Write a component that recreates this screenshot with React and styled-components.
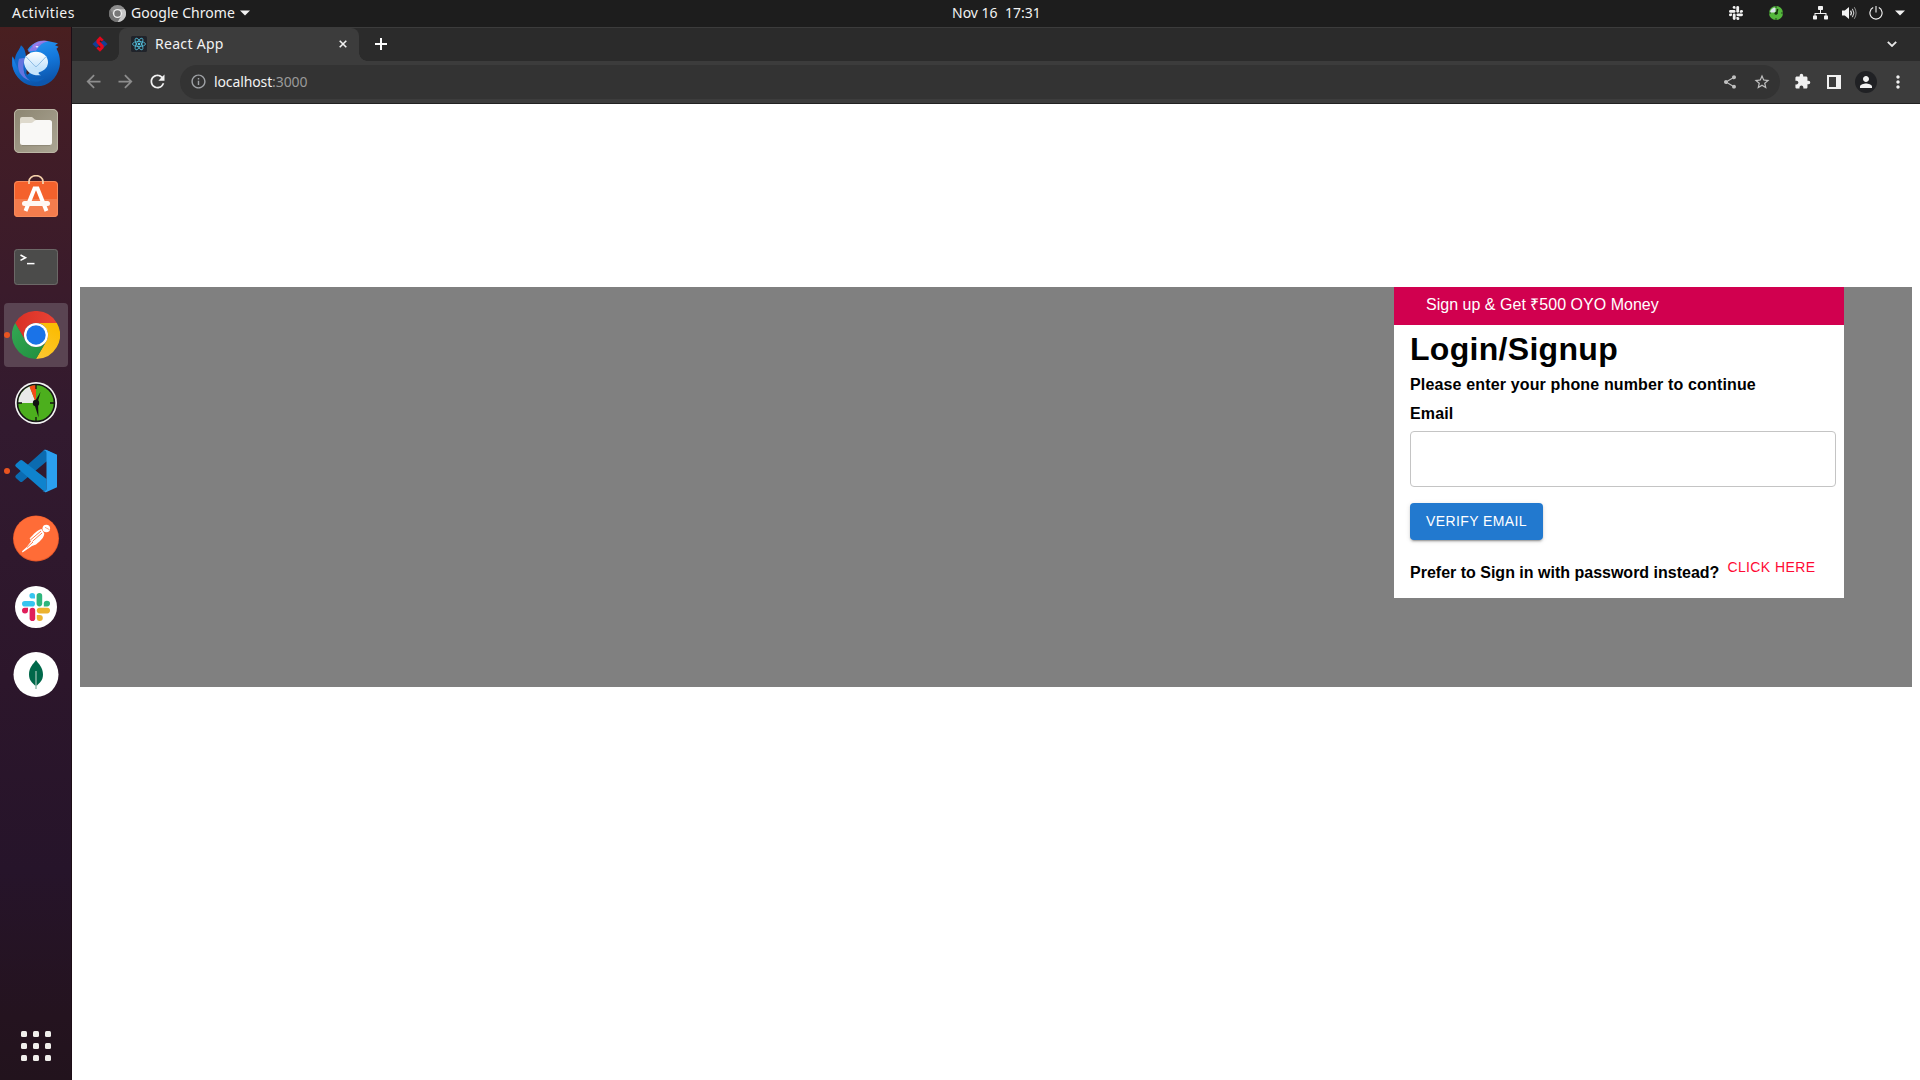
import React from "react";
import styled, { createGlobalStyle } from "styled-components";
import {
  MdArrowBack, MdArrowForward, MdRefresh, MdInfoOutline, MdShare, MdStarBorder,
  MdExtension, MdPerson, MdMoreVert,
} from "react-icons/md";

const GlobalStyle = createGlobalStyle`
  *, *::before, *::after { box-sizing: border-box; }
  body { margin: 0; background: #fff; overflow: hidden; }
  svg { display: block; flex: none; }
`;

const Desktop = styled.div`
  width: 1920px;
  height: 1080px;
  display: flex;
  flex-direction: column;
  font-family: "Noto Sans", "Open Sans", sans-serif;
`;

/* ---------- system bar ---------- */
const SystemBar = styled.header`
  height: 27px;
  flex: none;
  display: grid;
  grid-template-columns: 940px auto 1fr;
  align-items: center;
  padding: 0 15px 1px 12px;
  background: #1d1d1d;
  color: #f2f2f2;
`;
const BarGroup = styled.div`
  display: flex;
  align-items: center;
  justify-content: ${(p) => (p.$end ? "flex-end" : "flex-start")};
`;
const UiText = styled.span`
  font-size: ${(p) => p.$size || 14}px;
  line-height: 20px;
  letter-spacing: ${(p) => p.$track || 0}px;
  width: ${(p) => (p.$w ? `${p.$w}px` : "auto")};
  color: ${(p) => p.$color || "#f2f2f2"};
  white-space: pre;
`;
const AppMenu = styled.div`
  display: flex;
  align-items: center;
  margin-left: 34px;
`;
const Spacer = styled.span`
  width: ${(p) => p.$w}px;
  flex: none;
`;

/* ---------- dock ---------- */
const Body = styled.div`
  flex: 1;
  min-height: 0;
  display: flex;
`;
const Dock = styled.nav`
  width: 72px;
  flex: none;
  display: flex;
  flex-direction: column;
  align-items: center;
  gap: 4px;
  padding: 4px 0 2px;
  border-right: 1px solid #1c0d16;
  background: linear-gradient(180deg, #491f20 0%, #421d26 9%, #3a1b2b 25%, #321a2f 38%, #2c162b 62%, #26142a 80%, #24131f 94%, #22131d 100%);
`;
const DockItem = styled.div`
  position: relative;
  width: 64px;
  height: 64px;
  margin-left: 1px;
  flex: none;
  display: flex;
  align-items: center;
  justify-content: center;
  border-radius: 4px;
  background: ${(p) => (p.$active ? "#5a4452" : "transparent")};
`;
const RunningDot = styled.i`
  position: absolute;
  left: 0;
  top: 29px;
  width: 6px;
  height: 6px;
  border-radius: 50%;
  background: #e95420;
`;
const AppsGrid = styled.div`
  margin: auto 0 0 1px;
  width: 64px;
  height: 64px;
  display: grid;
  grid-template-columns: repeat(3, 6px);
  grid-auto-rows: 6px;
  gap: 6px;
  place-content: center;
`;
const AppsDot = styled.i`
  border-radius: 1.5px;
  background: #f0efec;
`;

/* ---------- browser ---------- */
const Browser = styled.main`
  flex: 1;
  min-width: 0;
  display: flex;
  flex-direction: column;
`;
const TabStrip = styled.div`
  height: 34px;
  flex: none;
  display: flex;
  align-items: stretch;
  padding-right: 23px;
  background: #2b2b2b;
  border-top: 1px solid #3c3c3c;
`;
const PinnedTab = styled.div`
  width: 47px;
  display: flex;
  align-items: center;
  justify-content: center;
  padding: 0 0 1px 9px;
`;
const ActiveTab = styled.div`
  position: relative;
  width: 240px;
  display: flex;
  align-items: center;
  padding: 0 12px 1px;
  border-radius: 8px 8px 0 0;
  background: #3c3c3c;
  &::before, &::after {
    content: "";
    position: absolute;
    bottom: 0;
    width: 8px;
    height: 8px;
  }
  &::before { left: -8px; background: radial-gradient(circle at 0 0, transparent 7.5px, #3c3c3c 8px); }
  &::after { right: -8px; background: radial-gradient(circle at 100% 0, transparent 7.5px, #3c3c3c 8px); }
`;
const NewTab = styled.div`
  display: flex;
  align-items: center;
  padding: 0 0 1px 16px;
  flex: 1;
`;
const StripEnd = styled.div`
  display: flex;
  align-items: center;
  padding-bottom: 2px;
`;
const Toolbar = styled.div`
  height: 43px;
  flex: none;
  display: flex;
  align-items: center;
  padding: 0 6px 1px 6px;
  background: #3c3c3c;
  border-bottom: 1px solid #222;
`;
const ToolSlot = styled.span`
  width: 32px;
  height: 32px;
  flex: none;
  display: flex;
  align-items: center;
  justify-content: center;
  color: ${(p) => p.$color || "#f1f1f1"};
`;
const NavSlot = styled(ToolSlot)`
  padding-right: 1px;
`;
const Omnibox = styled.div`
  flex: 1;
  height: 34px;
  margin: 0 6px;
  padding: 0 2px;
  display: flex;
  align-items: center;
  border-radius: 17px;
  background: #333;
`;
const Url = styled.div`
  flex: 1;
  display: flex;
`;
const Avatar = styled.span`
  width: 22px;
  height: 22px;
  display: flex;
  align-items: center;
  justify-content: center;
  border-radius: 50%;
  background: #202124;
`;

/* ---------- page ---------- */
const Page = styled.section`
  flex: 1;
  padding: 183px 8px 0;
  background: #fff;
  font-family: "Liberation Sans", Arial, sans-serif;
  color: #000;
`;
const Banner = styled.div`
  height: 400px;
  display: flex;
  justify-content: flex-end;
  align-items: flex-start;
  padding-right: 68px;
  background: #808080;
`;
const Card = styled.form`
  width: 450px;
  height: 311px;
  background: #fff;
`;
const Promo = styled.div`
  height: 38px;
  padding-left: 32px;
  background: #d1004f;
  color: #fff;
  font-size: 16px;
  line-height: 36px;
  letter-spacing: 0.02px;
`;
const Fields = styled.div`
  display: flex;
  flex-direction: column;
  align-items: flex-start;
  padding: 6px 8px 0 16px;
`;
const Title = styled.h1`
  margin: 0 0 9px;
  font-size: 32px;
  line-height: 36px;
  letter-spacing: 0.00938em;
`;
const Label = styled.label`
  margin-bottom: ${(p) => p.$gap}px;
  font-size: 16px;
  line-height: 18px;
  font-weight: 700;
  letter-spacing: 0.00938em;
`;
const Input = styled.input`
  width: 100%;
  height: 56px;
  padding: 16px 14px;
  border: 1px solid #c4c4c4;
  border-radius: 4px;
  background: #fff;
  outline: 0;
`;
const VerifyButton = styled.button`
  margin-top: 16px;
  height: 37px;
  padding: 0 16px 1px;
  border: 0;
  border-radius: 4px;
  background: #2279cf;
  color: #fff;
  font-family: inherit;
  font-size: 14px;
  line-height: 24px;
  letter-spacing: 0.4px;
  white-space: nowrap;
  box-shadow: 0 3px 1px -2px rgba(0,0,0,.2), 0 2px 2px 0 rgba(0,0,0,.14), 0 1px 5px 0 rgba(0,0,0,.12);
`;
const Alternative = styled.div`
  display: flex;
  align-items: flex-start;
  gap: 8px;
  padding-top: 18px;
`;
const AltLabel = styled.strong`
  margin-top: 6px;
  font-size: 16px;
  line-height: 18px;
`;
const AltLink = styled.a`
  color: #ff0a33;
  font-size: 14px;
  line-height: 18px;
  letter-spacing: 0.4px;
`;

/* ---------- drawings ---------- */
const Caret = () => (
  <svg width="10" height="6" viewBox="0 0 10 6"><path d="M0 .5h10L5 5.5z" fill="#f2f2f2" /></svg>
);

const SlackMark = ({ size, colors }) => {
  const [b, g, y, r] = colors;
  return (
    <svg width={size} height={size} viewBox="0 0 28 28">
      <g fill={b}><rect y="8" width="13" height="5.6" rx="2.8" /><path d="M10.2 0a2.8 2.8 0 0 1 2.8 2.8v2.8h-2.8a2.8 2.8 0 0 1 0-5.6z" /></g>
      <g fill={g}><rect x="14.6" width="5.6" height="13.4" rx="2.8" /><path d="M28 10.6a2.8 2.8 0 0 1-2.8 2.8h-3.4v-2.8a3.1 2.8 0 0 1 6.2 0z" /></g>
      <g fill={y}><rect x="14.8" y="14.8" width="13.2" height="5.6" rx="2.8" /><path d="M17.8 28a2.8 2.8 0 0 1-3-2.8V22h3a3 3 0 0 1 0 6z" /></g>
      <g fill={r}><rect x="7.6" y="14.8" width="5.6" height="13.2" rx="2.8" /><path d="M0 17.6a2.8 2.8 0 0 1 2.8-2.8H6v2.8a3 3 0 0 1-6 0z" /></g>
    </svg>
  );
};

const GreyChrome = () => (
  <svg width="17" height="17" viewBox="0 0 48 48">
    <circle cx="24" cy="24" r="24" fill="#8d8d8d" />
    <path d="M44.8 12A24 24 0 0 1 24 48L34.4 30A12 12 0 0 0 24 12z" fill="#c9c9c9" />
    <path d="M24 48A24 24 0 0 1 3.2 12L13.6 30A12 12 0 0 0 34.4 30z" fill="#747474" />
    <circle cx="24" cy="24" r="13" fill="#efefef" />
    <circle cx="24" cy="24" r="9" fill="#777" />
  </svg>
);

const TrackerMark = () => (
  <svg width="14" height="14" viewBox="0 0 14 14">
    <circle cx="7" cy="7" r="7" fill="#54b83c" />
    <path d="M6.500 6.500V1.500A5.500 5.500 0 0 0 1 6.500z" fill="#d9e2ea" />
    <path d="M7 0v2M14 7h-2M7 14v-2M0 7h2" stroke="#23431d" />
    <path d="M8.600 3 7.600 7.500" stroke="#17330f" strokeWidth="1.6" />
    <circle cx="7" cy="7.300" r="1.5" fill="#17330f" />
  </svg>
);

const NetworkIcon = () => (
  <svg width="15" height="14" viewBox="0 0 15 14" fill="#f2f2f2">
    <rect x="5" y="0" width="5" height="4" rx=".7" />
    <path d="M7 4h1v3h5.500v3h-1V8h-10v2h-1V7H7z" />
    <rect x="0" y="9.500" width="4" height="4" rx=".7" />
    <rect x="11" y="9.500" width="4" height="4" rx=".7" />
  </svg>
);

const VolumeIcon = () => (
  <svg width="15" height="14" viewBox="0 0 15 14" fill="none" stroke="#f2f2f2">
    <path d="M0 4.600h2.800L7 1v12L2.800 9.400H0z" fill="#f2f2f2" stroke="none" />
    <path d="M8.600 4.600q1.600 2.400 0 4.800" strokeWidth="1.3" />
    <path d="M10.400 2.800q3 4.200 0 8.400" strokeOpacity=".9" />
    <path d="M12.300 1.200q3.600 5.800 0 11.600" strokeOpacity=".55" />
  </svg>
);

const PowerIcon = () => (
  <svg width="14" height="14" viewBox="0 0 14 14" fill="none" stroke="#f2f2f2" strokeWidth="1.1">
    <path d="M4.200 1.600a6.100 6.100 0 1 0 5.600 0M7 0v6.500" />
  </svg>
);

const PinnedFavicon = () => (
  <svg width="16" height="16" viewBox="0 0 16 16">
    <path d="M.4 8 4.500 4.300 8.500 8 4.500 11.700z" fill="#123f96" />
    <path d="M15.600 8 11.500 11.700 7.500 8 11.500 4.300z" fill="#123f96" />
    <path d="M8 .3 11.700 3.800 9.800 5.500 8.300 4.300 7.500 5.300 11.700 9.500V12L8 15.700 4.500 12.400 6.200 10.600 7.900 11.900 8.600 10.900 4.500 6.700V3.900z" fill="#e3071d" />
  </svg>
);

const ReactFavicon = () => (
  <svg width="16" height="16" viewBox="0 0 32 32">
    <rect width="32" height="32" rx="3" fill="#20232a" />
    <g fill="none" stroke="#53c1de" strokeWidth="1.6">
      <ellipse cx="16" cy="16" rx="13" ry="5" />
      <ellipse cx="16" cy="16" rx="13" ry="5" transform="rotate(60 16 16)" />
      <ellipse cx="16" cy="16" rx="13" ry="5" transform="rotate(120 16 16)" />
    </g>
    <circle cx="16" cy="16" r="2.6" fill="#53c1de" />
  </svg>
);

const Thunderbird = () => (
  <svg width="48" height="48" viewBox="0 0 48 48">
    <defs>
      <linearGradient id="tbBody" x1="0" y1="0" x2=".3" y2="1">
        <stop offset="0" stopColor="#2d9cf4" /><stop offset=".55" stopColor="#1478dc" /><stop offset="1" stopColor="#0c56ad" />
      </linearGradient>
      <linearGradient id="tbMail" x1="0" y1="0" x2="0" y2="1">
        <stop offset="0" stopColor="#fff" /><stop offset="1" stopColor="#b5dcfb" />
      </linearGradient>
    </defs>
    <g transform="translate(0 .7)">
      <path d="M9 5.500C15 10 13 17 15.500 22L14 36 7 38C1 33-1 25 .5 16.500L3 20C3 14 7 11 9 5.500z" fill="#1168c8" />
      <path d="M15.500 10C21 2 30-.5 39 2l7 1.500-3 2 3.500 1.500-2 2C48 15 48.500 22 47.500 27 45 39 36 46.500 25 46.500 12 46.500 3 38 .5 26L.3 17C4 23 5 32 14 36L22 30 18 13z" fill="url(#tbBody)" />
      <path d="M16 12C21 4 29 .5 36 1.500 29 3 26 8 24 11 21 11 18 11 16 12z" fill="#8679e4" />
      <path d="M20 5.500C25 1 31 0 36 1.500 29 2 25 5 22 9z" fill="#b57beb" opacity=".6" />
      <path d="M7 19C4 29 8 38 18 41 11 35 10 26 13 18z" fill="#6374df" />
      <path d="M12 27C14 38 22 43 34 37 30 41 25 43 20 41.500 14 39 11 34 12 27z" fill="#0c61bd" />
      <ellipse cx="24" cy="22.500" rx="12" ry="10.500" fill="url(#tbMail)" />
      <path d="M13 26c2 7 8 10.500 16 9.500-3-1-3-3-1-5z" fill="#c8e5fb" />
      <path d="m14 17 9 9.500a1.500 1.500 0 0 0 2 0L34 17" fill="none" stroke="#8ebde5" strokeWidth="1" />
      <ellipse cx="25" cy="7" rx="1.400" ry=".8" fill="#e6f4ff" />
    </g>
  </svg>
);

const Files = () => (
  <svg width="48" height="48" viewBox="0 0 48 48">
    <defs><linearGradient id="fl" x1="0" y1="0" x2="1" y2="1"><stop offset="0" stopColor="#8c8571" /><stop offset="1" stopColor="#aca694" /></linearGradient></defs>
    <rect x="2" y="2" width="44" height="44" rx="5" fill="url(#fl)" />
    <rect x="2.500" y="2.500" width="43" height="43" rx="4.500" fill="none" stroke="#bcb6a5" />
    <path d="M8 30V12a2 2 0 0 1 2-2h9.500c2 0 2.500 3 5 3H30v10z" fill="#ded9cc" />
    <path d="M8 18a2 2 0 0 1 2-2h9c2.500 0 3-3 5.500-3H37.500a2.500 2.500 0 0 1 2.500 2.500v20a2.500 2.500 0 0 1-2.500 2.500H10.500a2.500 2.500 0 0 1-2.500-2.500z" fill="#f9f8f6" />
    <path d="M10 38.600h28" stroke="#7f7968" strokeWidth=".6" />
  </svg>
);

const Software = () => (
  <svg width="48" height="48" viewBox="0 0 48 48">
    <rect x="2" y="6" width="44" height="36" rx="4" fill="#f4612c" />
    <path d="M2 24h44v14a4 4 0 0 1-4 4H6a4 4 0 0 1-4-4z" fill="#f47c4d" />
    <rect x="2.500" y="6.500" width="43" height="35" rx="3.500" fill="none" stroke="#f58a5c" />
    <path d="M17 9V6.500a7 5.800 0 0 1 14 0V9" fill="none" stroke="#f4d0aa" strokeWidth="1.800" />
    <path d="m13.500 36 9-22.500h3l9 22.500" fill="none" stroke="#fff" strokeWidth="4" />
    <rect x="10" y="26" width="28" height="5" rx="2.500" fill="#fff7f3" />
  </svg>
);

const Terminal = () => (
  <svg width="48" height="48" viewBox="0 0 48 48">
    <rect x="2" y="6" width="44" height="36" rx="3.500" fill="#4b4b4a" />
    <rect x="2.500" y="6.500" width="43" height="35" rx="3" fill="none" stroke="#6c6867" />
    <path d="m8.500 12 5 2.700-5 2.700" fill="none" stroke="#fff" strokeWidth="1.600" />
    <path d="M15 20.600h7.500" stroke="#fff" strokeWidth="1.500" />
  </svg>
);

const Chrome = () => (
  <svg width="48" height="48" viewBox="0 0 48 48">
    <defs>
      <linearGradient id="cr" x1="0" x2="1"><stop offset="0" stopColor="#d93025" /><stop offset="1" stopColor="#ea4335" /></linearGradient>
      <linearGradient id="cy" x1="0" y1="1" x2=".5" y2="0"><stop offset="0" stopColor="#fcc934" /><stop offset="1" stopColor="#fbbc04" /></linearGradient>
      <linearGradient id="cg" x1="1" y1="1" x2="0" y2="0"><stop offset="0" stopColor="#1e8e3e" /><stop offset="1" stopColor="#34a853" /></linearGradient>
    </defs>
    <path d="M3.200 12A24 24 0 0 1 44.800 12L24 12A12 12 0 0 0 13.600 30z" fill="url(#cr)" />
    <path d="M44.800 12A24 24 0 0 1 24 48L34.400 30A12 12 0 0 0 24 12z" fill="url(#cy)" />
    <path d="M24 48A24 24 0 0 1 3.200 12L13.600 30A12 12 0 0 0 34.400 30z" fill="url(#cg)" />
    <circle cx="24" cy="24" r="12" fill="#fff" />
    <circle cx="24" cy="24" r="9.700" fill="#1a73e8" />
  </svg>
);

const TrackerClock = () => (
  <svg width="48" height="48" viewBox="0 0 48 48">
    <circle cx="24" cy="24" r="21" fill="#f4f4f4" />
    <circle cx="24" cy="24" r="18.500" fill="#4caf1d" stroke="#151515" strokeWidth="1.600" />
    <path d="M24 24H6.300A17.700 17.700 0 0 1 17.500 7.500z" fill="#e9e9e9" />
    <path d="m24 24-6.500-16.500A17.700 17.700 0 0 1 24 6.300z" fill="#f44a16" />
    <path d="M24 6v4M42 24h-4M24 42v-4M6 24h4" stroke="#111" strokeWidth="1.300" />
    <path d="m28.500 13-3 11-3-1z" fill="#111" />
    <path d="m22 24 4-.5.500 15z" fill="#111" />
    <circle cx="24" cy="24" r="3.200" fill="#111" />
  </svg>
);

const VsCode = () => (
  <svg width="48" height="48" viewBox="0 0 48 48">
    <path d="M34.500 3 45 8v8L34.500 14.500 10.500 34.500a2 2 0 0 1-2.600 0l-4-3.500a2 2 0 0 1 0-2.800L31 4z" fill="#0b6bb0" />
    <path d="m10.500 13.500 24 18.500v13L31 43.500 3.900 19.800a2 2 0 0 1 0-2.900l4-3.400a2 2 0 0 1 2.600 0z" fill="#0f83cd" />
    <path d="M34.500 3 45 7.800V40.200L34.500 45c-1.500.5-3 0-3.800-1 1.500 1 3.800.2 3.800-2V6c0-2.200-2.300-3-3.800-2 .8-1 2.300-1.500 3.800-1z" fill="#2ba0ef" />
  </svg>
);

const Postman = () => (
  <svg width="48" height="48" viewBox="0 0 48 48">
    <circle cx="24" cy="23.500" r="23" fill="#e4572a" />
    <circle cx="24" cy="23.200" r="22.200" fill="#ff6c37" />
    <g transform="translate(0 -.5)">
      <circle cx="34.300" cy="14" r="3.800" fill="#fff" />
      <path d="m33 12.800 4.500 2.400" stroke="#ff9a75" strokeWidth=".9" />
      <path d="M29.500 14.500c-4 .5-8 5.500-12 9.500l1.200.4-.8 1.600 1.600.3-5 6.500-4.500 4 .5 1.200L20 31.500l4-1.500c5-4 8-7 8.300-11z" fill="#fff" />
      <path d="m19 25 10-8.500M20.500 26.800 30 18.500M15 33l6-5.500" stroke="#ff6c37" strokeWidth=".9" />
    </g>
  </svg>
);

const SlackDisc = styled.span`
  width: 42px;
  height: 42px;
  display: flex;
  align-items: center;
  justify-content: center;
  border-radius: 50%;
  background: #fff;
`;

const Mongo = () => (
  <svg width="48" height="48" viewBox="0 0 48 48">
    <circle cx="24" cy="23.500" r="22.500" fill="#fff" />
    <path d="M24 9c2.500 4 7 7 7 14.500 0 6-3.500 8.500-6 11h-2c-2.500-2.500-6-5-6-11C17 16 21.500 13 24 9z" fill="#00684a" />
    <path d="M24 20v18" stroke="#8cb8a8" strokeWidth="1.400" />
  </svg>
);

const apps = [
  { name: "mail", art: <Thunderbird /> },
  { name: "files", art: <Files /> },
  { name: "software", art: <Software /> },
  { name: "terminal", art: <Terminal /> },
  { name: "chrome", art: <Chrome />, active: true, running: true },
  { name: "tracker", art: <TrackerClock /> },
  { name: "code", art: <VsCode />, running: true },
  { name: "postman", art: <Postman /> },
  { name: "slack", art: <SlackDisc><SlackMark size={28} colors={["#36c5f0", "#2eb67d", "#ecb22e", "#e01e5a"]} /></SlackDisc> },
  { name: "mongo", art: <Mongo /> },
];

export default function App() {
  return (
    <Desktop>
      <GlobalStyle />
      <SystemBar>
        <BarGroup>
          <UiText $w={63} $track={0.45}>Activities</UiText>
          <AppMenu>
            <GreyChrome />
            <Spacer $w={5} />
            <UiText $w={109} $track={0.04}>Google Chrome</UiText>
            <Caret />
          </AppMenu>
        </BarGroup>
        <UiText>Nov 16  17:31</UiText>
        <BarGroup $end>
          <SlackMark size={14} colors={["#f2f2f2", "#f2f2f2", "#f2f2f2", "#f2f2f2"]} />
          <Spacer $w={26} />
          <TrackerMark />
          <Spacer $w={30} />
          <NetworkIcon />
          <Spacer $w={14} />
          <VolumeIcon />
          <Spacer $w={12} />
          <PowerIcon />
          <Spacer $w={12} />
          <Caret />
        </BarGroup>
      </SystemBar>
      <Body>
        <Dock>
          {apps.map((a) => (
            <DockItem key={a.name} $active={a.active}>
              {a.running && <RunningDot />}
              {a.art}
            </DockItem>
          ))}
          <AppsGrid>
            {Array.from({ length: 9 }, (_, i) => <AppsDot key={i} />)}
          </AppsGrid>
        </Dock>
        <Browser>
          <TabStrip>
            <PinnedTab><PinnedFavicon /></PinnedTab>
            <ActiveTab>
              <ReactFavicon />
              <Spacer $w={8} />
              <UiText $w={184} $track={0.3}>React App</UiText>
              <svg width="8" height="8" viewBox="0 0 8 8"><path d="m.7.7 6.600 6.600M7.300.7.700 7.300" stroke="#f1f1f1" strokeWidth="1.600" /></svg>
            </ActiveTab>
            <NewTab>
              <svg width="12" height="12" viewBox="0 0 12 12"><path d="M6 0v12M0 6h12" stroke="#fff" strokeWidth="2" /></svg>
            </NewTab>
            <StripEnd>
              <svg width="10" height="6" viewBox="0 0 10 6"><path d="m.8.800 4.200 4.200L9.200.800" fill="none" stroke="#e8e8e8" strokeWidth="1.800" /></svg>
            </StripEnd>
          </TabStrip>
          <Toolbar>
            <NavSlot $color="#8d8d8d"><MdArrowBack size={21} /></NavSlot>
            <NavSlot $color="#8d8d8d"><MdArrowForward size={21} /></NavSlot>
            <NavSlot><MdRefresh size={21} /></NavSlot>
            <Omnibox>
              <ToolSlot $color="#a0a3a7"><MdInfoOutline size={17} /></ToolSlot>
              <Url>
                <UiText $track={-0.12}>localhost</UiText>
                <UiText $color="#9a9a9a" $track={-0.1}>:3000</UiText>
              </Url>
              <ToolSlot $color="#c0c0c0"><MdShare size={16} /></ToolSlot>
              <ToolSlot $color="#c0c0c0"><MdStarBorder size={18} /></ToolSlot>
            </Omnibox>
            <ToolSlot><MdExtension size={17} /></ToolSlot>
            <ToolSlot>
              <svg width="14" height="14" viewBox="0 0 14 14"><path d="M0 0h14v14H0zM2 2v10h7V2z" fill="#f1f1f1" fillRule="evenodd" /></svg>
            </ToolSlot>
            <ToolSlot><Avatar><MdPerson size={18} /></Avatar></ToolSlot>
            <ToolSlot><MdMoreVert size={20} /></ToolSlot>
          </Toolbar>
          <Page>
            <Banner>
              <Card>
                <Promo>Sign up &amp; Get ₹500 OYO Money</Promo>
                <Fields>
                  <Title>Login/Signup</Title>
                  <Label $gap={11}>Please enter your phone number to continue</Label>
                  <Label htmlFor="email" $gap={8}>Email</Label>
                  <Input id="email" />
                  <VerifyButton type="button">VERIFY EMAIL</VerifyButton>
                  <Alternative>
                    <AltLabel>Prefer to Sign in with password instead?</AltLabel>
                    <AltLink>CLICK HERE</AltLink>
                  </Alternative>
                </Fields>
              </Card>
            </Banner>
          </Page>
        </Browser>
      </Body>
    </Desktop>
  );
}
